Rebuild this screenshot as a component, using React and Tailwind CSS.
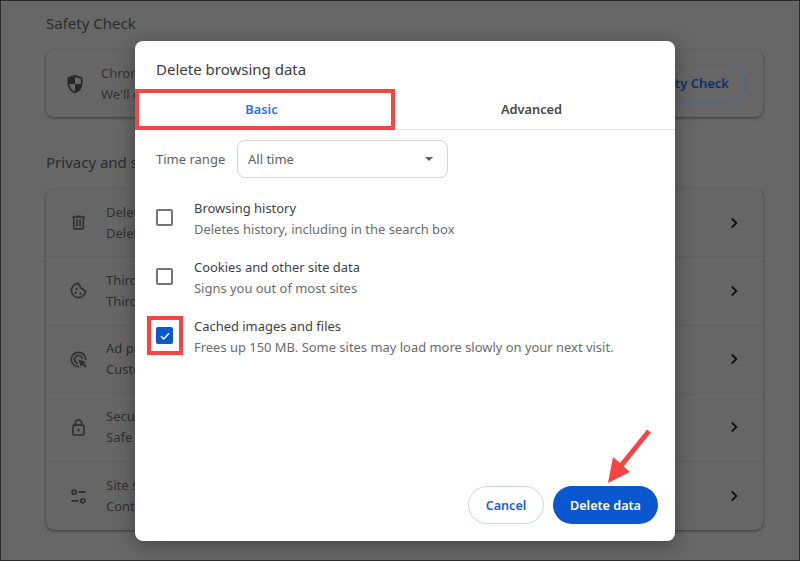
const FONT = "font-['Noto_Sans','Open_Sans',sans-serif]";

function Ico({ children, className = "" }) {
  return (
    <svg viewBox="0 0 24 24" className={`w-[19px] h-[19px] shrink-0 ${className}`} fill="#2e2e2e">
      {children}
    </svg>
  );
}

const icons = {
  trash: (
    <Ico>
      <path d="M7 21q-.825 0-1.412-.587Q5 19.825 5 19V6H4V4h5V3h6v1h5v2h-1v13q0 .825-.587 1.413Q17.825 21 17 21ZM17 6H7v13h10ZM9 17h2V8H9Zm4 0h2V8h-2ZM7 6v13Z" />
    </Ico>
  ),
  cookie: (
    <Ico>
      <path
        d="M12 3a9 9 0 1 0 9 9c-1.8.3-3.2-.6-3.6-2.3-1.9.2-3.3-1.1-3.3-3C12.9 6 12.2 4.600 12 3Z"
        fill="none"
        stroke="#2e2e2e"
        strokeWidth="2"
        strokeLinejoin="round"
      />
      <circle cx="9.500" cy="10" r="1.400" />
      <circle cx="8.500" cy="15" r="1.400" />
      <circle cx="14.500" cy="16" r="1.400" />
    </Ico>
  ),
  ads: (
    <Ico>
      <path d="M11.71 17.99A5.993 5.993 0 0 1 6 12c0-3.31 2.69-6 6-6 3.22 0 5.84 2.53 5.99 5.71l-2.1-.63A3.999 3.999 0 0 0 12 8c-2.21 0-4 1.79-4 4 0 1.89 1.31 3.47 3.08 3.89l.63 2.1zM22 12c0 .3-.01.6-.04.9l-1.97-.59c.01-.1.01-.21.01-.31 0-4.42-3.58-8-8-8s-8 3.58-8 8 3.58 8 8 8c.1 0 .21 0 .31-.01l.59 1.97c-.3.03-.6.04-.9.04-5.52 0-10-4.48-10-10S6.48 2 12 2s10 4.48 10 10zm-3.77 4.26L22 15l-10-3 3 10 1.26-3.77 4.27 4.27 1.98-1.98-4.28-4.26z" />
    </Ico>
  ),
  lock: (
    <Ico>
      <rect x="5" y="9" width="14" height="12.500" rx="1.500" fill="none" stroke="#2e2e2e" strokeWidth="2" />
      <path d="M8 9V6.500a4 4 0 0 1 8 0V9" fill="none" stroke="#2e2e2e" strokeWidth="2" />
      <circle cx="12" cy="15.200" r="1.500" />
    </Ico>
  ),
  tune: (
    <Ico>
      <circle cx="6.500" cy="6.500" r="2.600" fill="none" stroke="#2e2e2e" strokeWidth="2" />
      <path d="M12 6.500h9M3 17.500h9" stroke="#2e2e2e" strokeWidth="2" />
      <circle cx="17.500" cy="17.500" r="2.600" fill="none" stroke="#2e2e2e" strokeWidth="2" />
    </Ico>
  ),
};

function Chevron() {
  return (
    <svg viewBox="0 0 12 12" className="w-[12px] h-[12px] shrink-0">
      <path d="M3.800 1.500 8.300 6l-4.500 4.500" fill="none" stroke="#111" strokeWidth="1.800" />
    </svg>
  );
}

const rows = [
  ["trash", "Delete browsing data", "Delete history, cookies, cache, and more"],
  ["cookie", "Third-party cookies", "Third-party cookies are blocked in Incognito mode"],
  ["ads", "Ad privacy", "Customize the info used by sites to show you ads"],
  ["lock", "Security", "Safe Browsing (protection from dangerous sites)"],
  ["tune", "Site settings", "Controls what information sites can use and show"],
];

function SettingRow({ icon, title, sub, last }) {
  return (
    <div className={`h-[68.250px] flex items-center pl-[23px] pr-[23px] ${last ? "" : "border-b border-[#5e5e5e]"}`}>
      {icons[icon]}
      <div className="ml-[18px] flex-1 text-[13px] leading-[21px] text-[#2f2f2f]">
        <div>{title}</div>
        <div>{sub}</div>
      </div>
      <Chevron />
    </div>
  );
}

function CheckRow({ title, sub, checked }) {
  return (
    <div className="flex items-center h-[59px]">
      {checked ? (
        <div className="w-[17px] h-[17px] rounded-[2px] bg-[#0b57d0] flex items-center justify-center">
          <svg viewBox="0 0 12 12" className="w-[12px] h-[12px]">
            <path d="M2 6.300 4.800 9 10 3.300" fill="none" stroke="#fff" strokeWidth="1.500" />
          </svg>
        </div>
      ) : (
        <div className="w-[17px] h-[17px] rounded-[2px] border-2 border-[#757575]" />
      )}
      <div className="ml-[21px] pt-[2px] text-[12.950px] leading-[21px]">
        <div className="text-[#3f3f3f]">{title}</div>
        <div className="text-[#6b6b6b]">{sub}</div>
      </div>
    </div>
  );
}

export default function App() {
  return (
    <div className={`relative w-[800px] h-[561px] overflow-hidden bg-[#676767] border border-[#2b2b2b] ${FONT}`}>
      <div className="pl-[45px] pr-[36px]">
        <h2 className="h-[49px] pt-[11px] text-[15px] leading-[22px] font-normal text-[#2c2c2c]">Safety Check</h2>
        <div className="h-[67px] rounded-lg bg-[#666] shadow-[0_1px_3px_rgba(0,0,0,0.45)] flex items-center pl-[19px] pr-[17px]">
          <svg viewBox="0 0 24 24" className="w-[20px] h-[20px] shrink-0">
            <path d="M12 2 4 5v6.100c0 5 3.400 9.700 8 10.900 4.600-1.200 8-5.900 8-10.900V5Z" fill="none" stroke="#262626" strokeWidth="2" />
            <path d="M12 3v9H4.500V6ZM12 12h7.500c-.4 4.300-3.500 8-7.500 9Z" fill="#262626" />
          </svg>
          <div className="ml-[16px] flex-1 text-[13px] leading-[21px] text-[#333]">
            <div>Chrome can help keep you safe from data breaches</div>
            <div>We'll check your passwords and extensions</div>
          </div>
          <div className="h-[38px] pl-[20px] pr-[16px] rounded-full border border-[#4a6390] flex items-center text-[13px] font-semibold text-[#0f2f6b]">
            Run Safety Check
          </div>
        </div>
        <h2 className="h-[72px] pt-[34px] text-[15px] leading-[22px] font-normal text-[#2c2c2c]">Privacy and security</h2>
        <div className="rounded-lg bg-[#666] shadow-[0_1px_3px_rgba(0,0,0,0.45)]">
          {rows.map((r, i) => (
            <SettingRow key={r[0]} icon={r[0]} title={r[1]} sub={r[2]} last={i === rows.length - 1} />
          ))}
        </div>
      </div>

      <div className="absolute left-[134px] top-[40px] w-[540px] h-[500px] bg-white rounded-lg shadow-[0_4px_20px_rgba(0,0,0,0.35)] flex flex-col">
        <div className="h-[48px] pl-[21px] pt-[17px] text-[15px] leading-[22px] text-[#3c3c3c]">Delete browsing data</div>
        <div className="h-[41px] flex border-b border-[#e3e3e3] text-[12.800px] font-semibold">
          <div className="flex-1 flex items-center justify-center pt-[2px] pr-[17px] text-[#2a72e5]">Basic</div>
          <div className="flex-1 flex items-center justify-center pt-[2px] pr-[17px] text-[#474747]">Advanced</div>
        </div>
        <div className="flex items-center pl-[21px] mt-[10px] h-[38px]">
          <span className="pt-[2px] text-[13px] text-[#5f5f5f] w-[81px]">Time range</span>
          <div className="w-[211px] h-[38px] rounded-lg border border-[#d4d4d4] flex items-center justify-between pl-[10px] pr-[14px] text-[13px] text-[#5f5f5f]">
            <span className="pt-[2px]">All time</span>
            <span className="w-0 h-0 border-x-[4px] border-x-transparent border-t-[4px] border-t-[#5f5f5f]" />
          </div>
        </div>
        <div className="pl-[21px] mt-[10px]">
          <CheckRow title="Browsing history" sub="Deletes history, including in the search box" />
          <CheckRow title="Cookies and other site data" sub="Signs you out of most sites" />
          <CheckRow checked title="Cached images and files" sub="Frees up 150 MB. Some sites may load more slowly on your next visit." />
        </div>
        <div className="mt-auto mb-[17px] mr-[17px] flex justify-end gap-[9px] text-[12.600px] font-semibold">
          <div className="w-[76px] h-[38px] pt-[2px] rounded-full border border-[#c2d7f8] flex items-center justify-center text-[#1a5fd0]">Cancel</div>
          <div className="w-[105px] h-[38px] pt-[2px] rounded-full bg-[#0b57d0] flex items-center justify-center text-white">Delete data</div>
        </div>
      </div>

      {/* annotations */}
      <div className="absolute left-[134px] top-[88px] w-[260px] h-[41px] border-[4px] border-[#f44444]" />
      <div className="absolute left-[146px] top-[315px] w-[36px] h-[39px] border-[4px] border-[#f44444]" />
      <svg className="absolute left-[600px] top-[425px] w-[60px] h-[60px]" viewBox="0 0 60 60">
        <path d="M48 5 19 41" stroke="#f44444" strokeWidth="5" />
        <path d="M7 57 12 31 29 46Z" fill="#f44444" />
      </svg>
    </div>
  );
}
